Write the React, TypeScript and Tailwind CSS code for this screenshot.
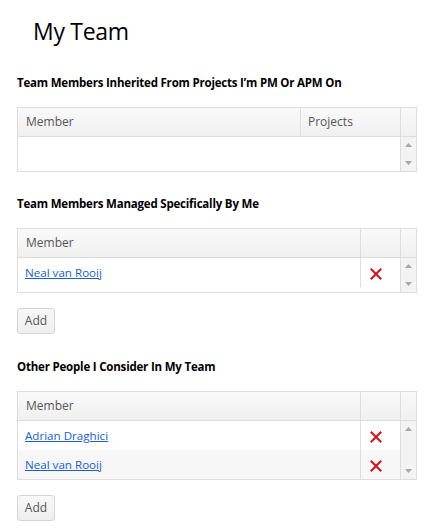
import React from "react";

const font = { fontFamily: '"Open Sans", "Noto Sans", sans-serif' };

function XIcon() {
  return (
    <svg width="12" height="12" viewBox="0 0 12 12">
      <path d="M1.5 1.5 L10.5 10.5 M10.5 1.5 L1.5 10.5" stroke="#d0121b" strokeWidth="2" strokeLinecap="square" />
    </svg>
  );
}

function ScrollArrows() {
  return (
    <div className="flex w-[16px] flex-col items-center justify-between border-l border-[#ddd] bg-[#f3f3f3] py-[6px]">
      <svg width="7" height="4" viewBox="0 0 7 4"><path d="M3.5 0 L7 4 L0 4 Z" fill="#a8a8a8" /></svg>
      <svg width="7" height="4" viewBox="0 0 7 4"><path d="M0 0 L7 0 L3.5 4 Z" fill="#a8a8a8" /></svg>
    </div>
  );
}

function Header({ second }: { second: "projects" | "x" }) {
  return (
    <div className="flex h-[29px] border-b border-[#ddd] bg-gradient-to-b from-[#f9f9f9] to-[#f0f0f0] text-[12px] text-[#555]">
      <div className="flex flex-1 items-center pl-[8px]">Member</div>
      {second === "projects" ? (
        <div className="flex w-[100px] items-center border-l border-[#ddd] pl-[7px]">Projects</div>
      ) : (
        <div className="w-[40px] border-l border-[#ddd]" />
      )}
      <div className="w-[16px] border-l border-[#ddd]" />
    </div>
  );
}

function Row({ name, alt }: { name: string; alt?: boolean }) {
  return (
    <div className={`flex h-[29px] ${alt ? "bg-[#f7f7f7]" : "bg-white"}`}>
      <div className="flex flex-1 items-center pl-[7px]">
        <a href="#" className="text-[11.6px] text-[#1560d4] underline">{name}</a>
      </div>
      <div className="flex w-[40px] items-center justify-center border-l border-[#ddd] pr-[10px] pt-[2px]">
        <XIcon />
      </div>
    </div>
  );
}

function Heading({ children, className = "" }: { children: React.ReactNode; className?: string }) {
  return <div className={`text-[11.5px] font-bold leading-[16px] tracking-[-0.2px] text-black ${className}`}>{children}</div>;
}

function AddButton({ className = "" }: { className?: string }) {
  return (
    <button className={`h-[26px] w-[38px] rounded-[3px] border border-[#d5d5d5] bg-gradient-to-b from-[#f8f8f8] to-[#eeeeee] text-[12px] text-[#555] ${className}`}>
      Add
    </button>
  );
}

export default function App() {
  return (
    <div className="min-h-[528px] w-[439px] bg-white" style={font}>
      <div className="pl-[33px] pt-[15px] text-[23px] leading-[32px] tracking-[-0.3px] text-black">My Team</div>
      <div className="pl-[17px]">
        <Heading className="mt-[28px]">Team Members Inherited From Projects I&rsquo;m PM Or APM On</Heading>
        <div className="mt-[16px] w-[400px] border border-[#ddd]">
          <Header second="projects" />
          <div className="flex h-[34px]">
            <div className="flex-1" />
            <ScrollArrows />
          </div>
        </div>

        <Heading className="mt-[24px]">Team Members Managed Specifically By Me</Heading>
        <div className="mt-[16px] w-[400px] border border-[#ddd]">
          <Header second="x" />
          <div className="flex h-[34px]">
            <div className="flex-1">
              <Row name="Neal van Rooij" />
            </div>
            <ScrollArrows />
          </div>
        </div>
        <AddButton className="mt-[15px]" />

        <Heading className="mt-[25px]">Other People I Consider In My Team</Heading>
        <div className="mt-[16px] w-[400px] border border-[#ddd]">
          <Header second="x" />
          <div className="flex">
            <div className="flex-1">
              <Row name="Adrian Draghici" />
              <Row name="Neal van Rooij" alt />
            </div>
            <ScrollArrows />
          </div>
        </div>
        <AddButton className="mt-[15px]" />
      </div>
    </div>
  );
}
